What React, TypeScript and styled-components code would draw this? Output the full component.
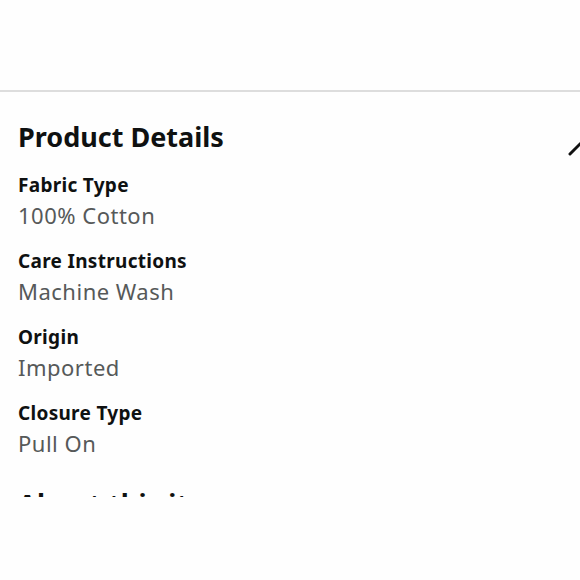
import React from "react";
import styled, { createGlobalStyle } from "styled-components";

interface Detail {
  label: string;
  value: string;
}

const DETAILS: Detail[] = [
  { label: "Fabric Type", value: "100% Cotton" },
  { label: "Care Instructions", value: "Machine Wash" },
  { label: "Origin", value: "Imported" },
  { label: "Closure Type", value: "Pull On" },
];

const App: React.FC = () => {
  return (
    <>
      <GlobalStyle />
      <StyledPage>
        <StyledTopSpace />
        <StyledSection>
          <StyledHeaderRow>
            <StyledTitle>Product Details</StyledTitle>
            <StyledChevron viewBox="0 0 32 20" width="32" height="20">
              <path
                d="M2 18 L16 4 L30 18"
                fill="none"
                stroke="#111"
                strokeWidth="3"
                strokeLinecap="round"
                strokeLinejoin="round"
              />
            </StyledChevron>
          </StyledHeaderRow>
          <StyledList>
            {DETAILS.map((d) => (
              <StyledItem key={d.label}>
                <StyledLabel>{d.label}</StyledLabel>
                <StyledValue>{d.value}</StyledValue>
              </StyledItem>
            ))}
          </StyledList>
          <StyledSubTitle>About this item</StyledSubTitle>
        </StyledSection>
      </StyledPage>
    </>
  );
};
export default App;

const GlobalStyle = createGlobalStyle`
  html, body {
    margin: 0;
    padding: 0;
    background: #fefefe;
    overflow: hidden;
  }
  body {
    font-family: "Noto Sans", "Open Sans", sans-serif;
    color: #0f1111;
  }
`;

const StyledPage = styled.div`
  width: 580px;
  height: 580px;
  overflow: hidden;
`;

const StyledTopSpace = styled.div`
  height: 90px;
  border-bottom: 2px solid #dddddd;
`;

const StyledSection = styled.div`
  height: 405px;
  overflow: hidden;
  padding: 0 0 0 18px;
`;

const StyledHeaderRow = styled.div`
  display: flex;
  align-items: flex-start;
  justify-content: space-between;
  margin-right: -20px;
  padding-top: 27px;
`;

const StyledTitle = styled.h2`
  margin: 0;
  font-size: 27px;
  line-height: 36px;
  font-weight: 700;
  color: #0f1111;
`;

const StyledChevron = styled.svg`
  margin-top: 17px;
  flex: 0 0 auto;
`;

const StyledList = styled.div`
  display: flex;
  flex-direction: column;
  gap: 16px;
  margin-top: 15px;
`;

const StyledItem = styled.div`
  display: flex;
  flex-direction: column;
`;

const StyledLabel = styled.div`
  font-size: 19px;
  line-height: 28px;
  font-weight: 700;
  letter-spacing: 0.3px;
  color: #0f1111;
`;

const StyledValue = styled.div`
  font-size: 22px;
  line-height: 32px;
  letter-spacing: 0.5px;
  color: #565959;
`;

const StyledSubTitle = styled.h3`
  margin: 27px 0 0;
  font-size: 27px;
  line-height: 36px;
  font-weight: 700;
  letter-spacing: 0.3px;
  color: #0f1111;
`;
